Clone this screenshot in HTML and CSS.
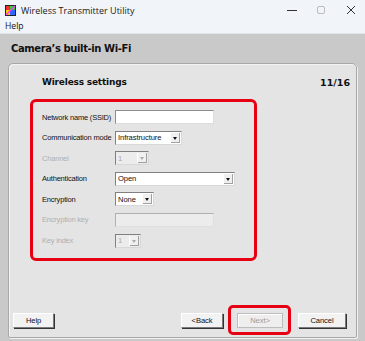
FILE: index.html
```html
<!DOCTYPE html>
<html>
<head>
<meta charset="utf-8">
<link rel="stylesheet" href="styles.css">
</head>
<body>
<div class="window">
  <div class="titlebar">
    <svg class="appicon" width="11" height="11" viewBox="0 0 11 11">
      <rect width="11" height="11" fill="#222"/>
      <rect x="1" y="1" width="4" height="4" fill="#e33"/>
      <rect x="5" y="1" width="5" height="4" fill="#3c3"/>
      <rect x="1" y="5" width="4" height="5" fill="#fc0"/>
      <rect x="5" y="5" width="5" height="5" fill="#36f"/>
      <path d="M1 10 L10 1" stroke="#f3f" stroke-width="1.5"/>
    </svg>
    <span class="title">Wireless Transmitter Utility</span>
    <div class="winctl">
      <svg width="10" height="10" viewBox="0 0 10 10"><path d="M0 5.5 H10" stroke="#333" stroke-width="1"/></svg>
      <svg width="10" height="10" viewBox="0 0 10 10"><rect x="1.5" y="1.5" width="7" height="7" rx="1.5" fill="none" stroke="#bbb"/></svg>
      <svg width="10" height="10" viewBox="0 0 10 10"><path d="M1 1 L9 9 M9 1 L1 9" stroke="#333" stroke-width="1"/></svg>
    </div>
  </div>
  <div class="menubar"><span>Help</span></div>
  <div class="main">
    <div class="heading">Camera’s built-in Wi-Fi</div>
    <div class="panel">
      <div class="panel-head">
        <span class="ptitle">Wireless settings</span>
        <span class="step">11/16</span>
      </div>
      <div class="redbox">
        <div class="row"><label>Network name (SSID)</label><div class="input w97"></div></div>
        <div class="row"><label>Communication mode</label><div class="select w65"><span>Infrastructure</span><i class="arrow"></i></div></div>
        <div class="row dis"><label>Channel</label><div class="select w32"><span>1</span><i class="arrow"></i></div></div>
        <div class="row"><label>Authentication</label><div class="select w118"><span>Open</span><i class="arrow"></i></div></div>
        <div class="row"><label>Encryption</label><div class="select w37"><span>None</span><i class="arrow"></i></div></div>
        <div class="row dis"><label>Encryption key</label><div class="input w97"></div></div>
        <div class="row dis"><label>Key index</label><div class="select w24"><span>1</span><i class="arrow"></i></div></div>
      </div>
      <div class="spacer"></div>
      <div class="buttons">
        <button class="btn help">Help</button>
        <div class="grow"></div>
        <button class="btn back">&lt;Back</button>
        <div class="nextwrap"><button class="btn next" disabled>Next&gt;</button></div>
        <button class="btn cancel">Cancel</button>
      </div>
    </div>
  </div>
</div>
</body>
</html>
```
FILE: styles.css
```css
html, body {
  margin: 0;
  padding: 0;
}
body {
  width: 365px;
  height: 341px;
  overflow: hidden;
  font-family: "Liberation Sans", Arial, sans-serif;
  background: #c8c8c8;
}
.window {
  display: flex;
  flex-direction: column;
  height: 341px;
}
.titlebar {
  height: 20px;
  background: #f1f4f9;
  display: flex;
  align-items: center;
  padding-left: 5px;
}
.appicon { flex: none; }
.title {
  margin-left: 5px;
  font-family: "Open Sans", sans-serif;
  font-size: 9px;
  color: #1a1a1a;
}
.winctl {
  margin-left: auto;
  display: flex;
  gap: 18px;
  padding-right: 9px;
}
.winctl svg:nth-child(1) { margin-right: 1px; }
.winctl svg:nth-child(2) { margin-right: 2px; }
.menubar {
  height: 13px;
  background: #f1f4f9;
  font-family: "Open Sans", sans-serif;
  font-size: 8.6px;
  line-height: 12px;
  padding-left: 5px;
  color: #111;
  border-bottom: 1px solid #e0e3e8;
}
.main {
  flex: 1;
  background: #c9c9c9;
  display: flex;
  flex-direction: column;
}
.heading {
  height: 29px;
  padding-left: 11px;
  font-family: "DejaVu Sans", sans-serif;
  font-weight: bold;
  font-size: 10px;
  letter-spacing: -0.4px;
  line-height: 30px;
  color: #111;
}
.panel {
  flex: 1;
  margin: 0 8px 3px 8px;
  background: #e4e4e4;
  border: 1px solid #a8a8a8;
  border-radius: 5px 5px 2px 2px;
  box-shadow: inset 1px 1px 0 #f4f4f4, 1px 1px 0 #f0f0f0;
  display: flex;
  flex-direction: column;
}
.panel-head {
  display: flex;
  justify-content: space-between;
  align-items: center;
  padding: 10px 6px 0 33px;
  height: 26px;
  box-sizing: border-box;
  font-family: "DejaVu Sans", sans-serif;
  font-weight: bold;
  color: #111;
}
.ptitle { font-size: 9px; letter-spacing: -0.2px; }
.step { font-size: 9.5px; }
.redbox {
  margin: 9px 0 0 21px;
  width: 227px;
  height: 162px;
  box-sizing: border-box;
  border: 3px solid #e60012;
  border-radius: 6px;
  padding: 8px 0 0 9px;
  display: flex;
  flex-direction: column;
  gap: 6.6px;
}
.row {
  display: flex;
  align-items: center;
  height: 14px;
}
.row label {
  width: 73px;
  flex: none;
  white-space: nowrap;
  font-family: "Liberation Sans", sans-serif;
  font-size: 7.5px;
  color: #111;
  letter-spacing: -0.2px;
}
.row.dis label { color: #b0b0b0; }
.input {
  height: 12px;
  background: #fff;
  border: 1px solid #8c8c8c;
  border-right-color: #dcdcdc;
  border-bottom-color: #dcdcdc;
}
.row.dis .input { background: #ececec; border-color: #b0b0b0 #e0e0e0 #e0e0e0 #b0b0b0; }
.select {
  height: 12px;
  background: #fff;
  border: 1px solid #808080;
  border-right-color: #d8d8d8;
  border-bottom-color: #d8d8d8;
  display: flex;
  align-items: center;
  position: relative;
  font-family: "Liberation Sans", sans-serif;
  font-size: 7.6px;
  color: #111;
}
.select span { padding-left: 2px; letter-spacing: -0.1px; }
.row.dis .select { background: #ececec; color: #aaa; }
.arrow {
  position: absolute;
  right: 1px;
  top: 1px;
  width: 9px;
  height: 10px;
  background: #f0f0f0;
  border-left: 1px solid #fff;
  box-shadow: inset -1px -1px 0 #a0a0a0;
}
.arrow::after {
  content: "";
  position: absolute;
  left: 2px;
  top: 4px;
  border-left: 2.5px solid transparent;
  border-right: 2.5px solid transparent;
  border-top: 3px solid #111;
}
.row.dis .arrow::after { border-top-color: #aaa; }
.w97 { width: 97px; }
.w65 { width: 65px; }
.w32 { width: 32px; }
.w118 { width: 118px; }
.w37 { width: 37px; }
.w24 { width: 24px; }
.spacer { flex: 1; }
.buttons {
  display: flex;
  align-items: center;
  padding: 0 10px 2px 4px;
}
.grow { flex: 1; }
.btn {
  height: 15px;
  padding: 0;
  margin: 0;
  font-family: "Liberation Sans", sans-serif;
  font-size: 7.6px;
  color: #111;
  background: #f2f2f2;
  border: 1px solid;
  border-color: #fff #7a7a7a #7a7a7a #fff;
  box-shadow: 1px 1px 0 #333;
  letter-spacing: -0.1px;
}
.help { width: 41px; }
.back { width: 42px; }
.cancel { width: 48px; }
.nextwrap {
  margin: 0 7px 0 5px;
  border: 3px solid #e60012;
  border-radius: 5px;
  padding: 5px 5px 4px 6px;
}
.next {
  display: block;
  width: 46px;
  color: #9a9a9a;
  background: #eeeeee;
  border-color: #bdbdbd;
  box-shadow: inset 1px 1px 0 #fff;
}
```
